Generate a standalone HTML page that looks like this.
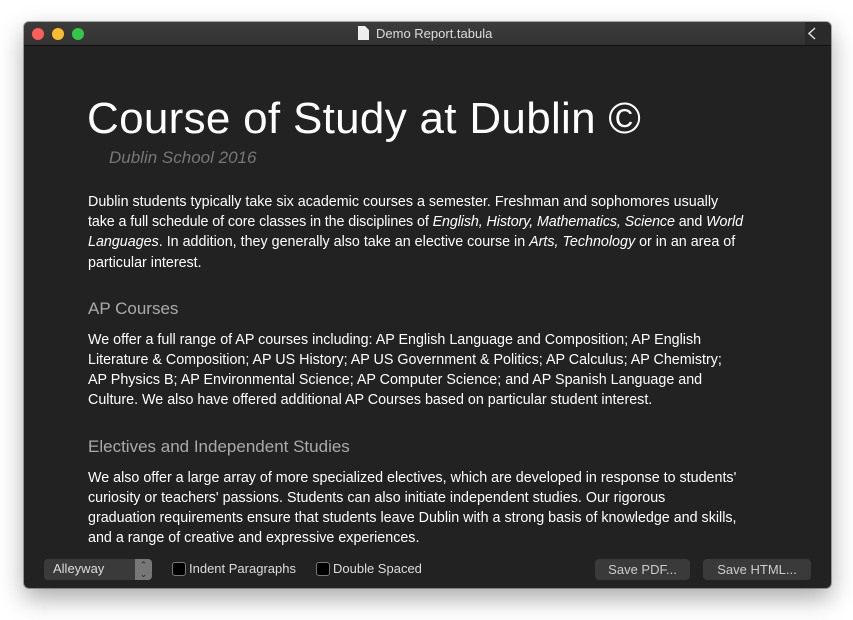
<!DOCTYPE html>
<html><head><meta charset="utf-8"><style>
body{margin:0;width:853px;height:620px;background:#fff;position:relative;overflow:hidden;font-family:"Liberation Sans",sans-serif}
.win{position:absolute;left:24px;top:22px;width:807px;height:566px;background:#222;border-radius:5px;box-shadow:0 10px 25px rgba(0,0,0,.35),0 0 0 1px rgba(0,0,0,.3);overflow:hidden}
.tb{position:absolute;left:0;top:0;width:100%;height:23px;background:linear-gradient(#3c3c3c,#333);border-bottom:1px solid #111}
.dot{position:absolute;top:6px;width:12px;height:12px;border-radius:50%}
.t{position:absolute;white-space:nowrap;color:#fff}
.p{font-size:14.3px;left:64px}
.h{font-size:17px;color:#aaa;left:64px}
.btn{position:absolute;top:537px;height:21px;background:#3a3a3a;border-radius:4px;color:#ccc;font-size:13px;line-height:21px;text-align:center}
.cb{position:absolute;top:540px;width:12px;height:12px;border:1px solid #777;border-radius:3px;background:#000}
.lbl{position:absolute;top:539px;color:#ddd;font-size:13px}
</style></head><body>
<div class="win">
<div class="tb">
<div class="dot" style="left:8px;background:#fc5f57"></div>
<div class="dot" style="left:28px;background:#fdbc2e"></div>
<div class="dot" style="left:48px;background:#33c748"></div>
<svg style="position:absolute;left:334px;top:4px" width="11" height="14"><path d="M0 0H7L11 4V14H0Z" fill="#eee"/></svg>
<div class="t" style="left:352px;top:4px;font-size:13px;color:#ddd">Demo Report.tabula</div>
<div style="position:absolute;right:0;top:0;width:26px;height:23px;background:#2a2a2a"></div>
<svg style="position:absolute;left:784px;top:5px" width="8" height="13"><path d="M7 1L1 6.5L7 12" stroke="#ddd" stroke-width="1.5" fill="none"/></svg>
</div>
<div class="t" style="left:63px;top:72px;font-size:44px;letter-spacing:0.3px">Course of Study at Dublin ©</div>
<div class="t" style="left:85px;top:126px;font-size:17px;font-style:italic;color:#777">Dublin School 2016</div>
<div class="t p" style="top:172px">Dublin students typically take six academic courses a semester. Freshman and sophomores usually</div>
<div class="t p" style="top:192px;letter-spacing:-0.1px">take a full schedule of core classes in the disciplines of <i>English, History, Mathematics, Science</i> and <i>World</i></div>
<div class="t p" style="top:212px"><i>Languages</i>. In addition, they generally also take an elective course in <i>Arts, Technology</i> or in an area of</div>
<div class="t p" style="top:233px">particular interest.</div>
<div class="t h" style="top:277px">AP Courses</div>
<div class="t p" style="top:310px">We offer a full range of AP courses including: AP English Language and Composition; AP English</div>
<div class="t p" style="top:330px">Literature &amp; Composition; AP US History; AP US Government &amp; Politics; AP Calculus; AP Chemistry;</div>
<div class="t p" style="top:350px">AP Physics B; AP Environmental Science; AP Computer Science; and AP Spanish Language and</div>
<div class="t p" style="top:370px">Culture. We also have offered additional AP Courses based on particular student interest.</div>
<div class="t h" style="top:415px">Electives and Independent Studies</div>
<div class="t p" style="top:448px">We also offer a large array of more specialized electives, which are developed in response to students'</div>
<div class="t p" style="top:468px">curiosity or teachers' passions. Students can also initiate independent studies. Our rigorous</div>
<div class="t p" style="top:488px">graduation requirements ensure that students leave Dublin with a strong basis of knowledge and skills,</div>
<div class="t p" style="top:508px">and a range of creative and expressive experiences.</div>
<div style="position:absolute;left:20px;top:537px;width:108px;height:21px;background:#3a3a3a;border-radius:4px"></div>
<div class="lbl" style="left:29px">Alleyway</div>
<div style="position:absolute;left:111px;top:537px;width:17px;height:21px;background:#777;border-radius:0 4px 4px 0;color:#222;font-size:9px;line-height:9px;text-align:center;padding-top:2px;box-sizing:border-box">⌃<br>⌄</div>
<div class="cb" style="left:148px"></div><div class="lbl" style="left:165px">Indent Paragraphs</div>
<div class="cb" style="left:292px"></div><div class="lbl" style="left:309px">Double Spaced</div>
<div class="btn" style="left:571px;width:95px">Save PDF...</div>
<div class="btn" style="left:679px;width:108px">Save HTML...</div>
</div>
</body></html>
